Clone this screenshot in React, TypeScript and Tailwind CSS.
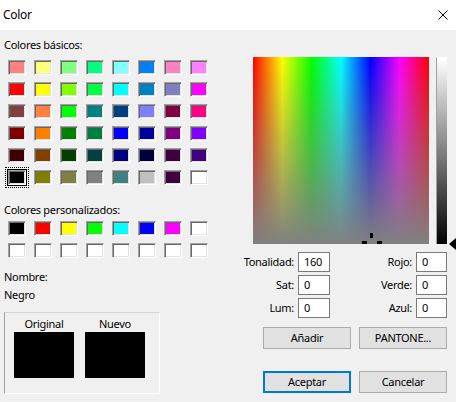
import React from "react";

const basic = [
  ["#ff8080", "#ffff80", "#80ff80", "#00ff80", "#80ffff", "#0080ff", "#ff80c0", "#ff80ff"],
  ["#ff0000", "#ffff00", "#80ff00", "#00ff40", "#00ffff", "#0080c0", "#8080c0", "#ff00ff"],
  ["#804040", "#ff8040", "#00ff00", "#008080", "#004080", "#8080ff", "#800040", "#ff0080"],
  ["#800000", "#ff8000", "#008000", "#008040", "#0000ff", "#0000a0", "#800080", "#8000ff"],
  ["#400000", "#804000", "#004000", "#004040", "#000080", "#000040", "#400040", "#400080"],
  ["#000000", "#808000", "#808040", "#808080", "#408080", "#c0c0c0", "#400040", "#ffffff"],
].flat();

const custom = [
  "#000000", "#ff0000", "#ffff00", "#00ff00", "#00ffff", "#0000ff", "#ff00ff", "#ffffff",
  "#ffffff", "#ffffff", "#ffffff", "#ffffff", "#ffffff", "#ffffff", "#ffffff", "#ffffff",
];

function Swatch({ color, selected }: { color: string; selected?: boolean }) {
  return (
    <div className="relative h-[15px] w-[18px]">
      {selected && (
        <>
          <span className="absolute -inset-[3px] border border-dotted border-black" />
          <span className="absolute -inset-[1px] border border-black" />
        </>
      )}
      <div
        className="relative h-full w-full border border-[#a0a0a0] border-b-white border-r-white shadow-[inset_1px_1px_0_#696969,inset_-1px_-1px_0_#e3e3e3]"
        style={{ backgroundColor: color }}
      />
    </div>
  );
}

function Field({ label, value }: { label: string; value: string }) {
  return (
    <>
      <span className="text-right">{label}</span>
      <div className="flex h-[20px] items-center border border-[#7a7a7a] bg-white pl-[5px]">{value}</div>
    </>
  );
}

function Button({ children, primary }: { children: React.ReactNode; primary?: boolean }) {
  return (
    <button
      className={`flex h-[22px] w-[88px] items-center justify-center bg-[#e1e1e1] ${
        primary ? "border-2 border-[#0078d7]" : "border border-[#adadad]"
      }`}
    >
      {children}
    </button>
  );
}

export default function App() {
  return (
    <div className="h-[402px] w-[456px] overflow-hidden bg-[#f0f0f0] font-['Noto_Sans',sans-serif] text-[11px] leading-[16px] tracking-[-0.3px] text-black">
      <div className="flex h-[30px] items-center justify-between bg-white pl-[3px] pr-[8px]">
        <span className="text-[12px]">Color</span>
        <svg width="10" height="10" viewBox="0 0 10 10">
          <path d="M0.5 0.5L9.5 9.5M9.5 0.5L0.5 9.5" stroke="#000" strokeWidth="1" fill="none" />
        </svg>
      </div>

      <div className="flex">
        <div className="w-[240px] pl-[4px]">
          <p className="mt-[7px]">Colores básicos:</p>
          <div className="ml-[4px] mt-[7px] grid grid-cols-[repeat(8,18px)] gap-x-[8px] gap-y-[7px]">
            {basic.map((c, i) => (
              <Swatch key={i} color={c} selected={i === 40} />
            ))}
          </div>

          <p className="mt-[17px]">Colores personalizados:</p>
          <div className="ml-[4px] mt-[3px] grid grid-cols-[repeat(8,18px)] gap-x-[8px] gap-y-[7px]">
            {custom.map((c, i) => (
              <Swatch key={i} color={c} />
            ))}
          </div>

          <p className="mt-[11px]">Nombre:</p>
          <p className="mt-[2px]">Negro</p>

          <div className="mt-[9px] flex h-[82px] w-[156px] gap-[11px] border border-[#d5d5d5] border-b-white border-l-[#a0a0a0] border-r-white pl-[9px] pt-[3px]">
            <div className="flex flex-col items-center">
              <span>Original</span>
              <div className="h-[46px] w-[60px] bg-black" />
            </div>
            <div className="flex flex-col items-center">
              <span>Nuevo</span>
              <div className="h-[46px] w-[60px] bg-black" />
            </div>
          </div>
        </div>

        <div className="flex-1">
          <div className="mt-[27px] flex pl-[13px]">
            <div className="relative h-[187px] w-[176px] overflow-hidden bg-[image:linear-gradient(to_bottom,rgba(128,128,128,0),#808080),linear-gradient(to_right,#f00,#ff0,#0f0,#0ff,#00f,#f0f,#f00)]">
              <span className="absolute left-[117px] top-[176px] h-[5px] w-[3px] bg-black" />
              <span className="absolute left-[109px] top-[184px] h-[3px] w-[5px] bg-black" />
              <span className="absolute left-[124px] top-[184px] h-[3px] w-[5px] bg-black" />
            </div>
            <div className="relative ml-[7px] h-[187px] w-[11px] border-l border-t border-l-[#a0a0a0] border-t-white bg-[linear-gradient(to_bottom,#ffffff,#000000)]">
              <span className="absolute left-[12px] top-[180px] h-0 w-0 border-y-[6px] border-r-[7px] border-y-transparent border-r-black" />
            </div>
          </div>

          <div className="mr-[9px] mt-[8px] grid grid-cols-[54px_32px_1fr_31px] items-center gap-x-[4px] gap-y-[3px]">
            <Field label="Tonalidad:" value="160" />
            <Field label="Rojo:" value="0" />
            <Field label="Sat:" value="0" />
            <Field label="Verde:" value="0" />
            <Field label="Lum:" value="0" />
            <Field label="Azul:" value="0" />
          </div>

          <div className="mt-[9px] flex gap-[8px] pl-[23px]">
            <Button>Añadir</Button>
            <Button>PANTONE...</Button>
          </div>
          <div className="mt-[22px] flex gap-[8px] pl-[23px]">
            <Button primary>Aceptar</Button>
            <Button>Cancelar</Button>
          </div>
        </div>
      </div>
    </div>
  );
}
